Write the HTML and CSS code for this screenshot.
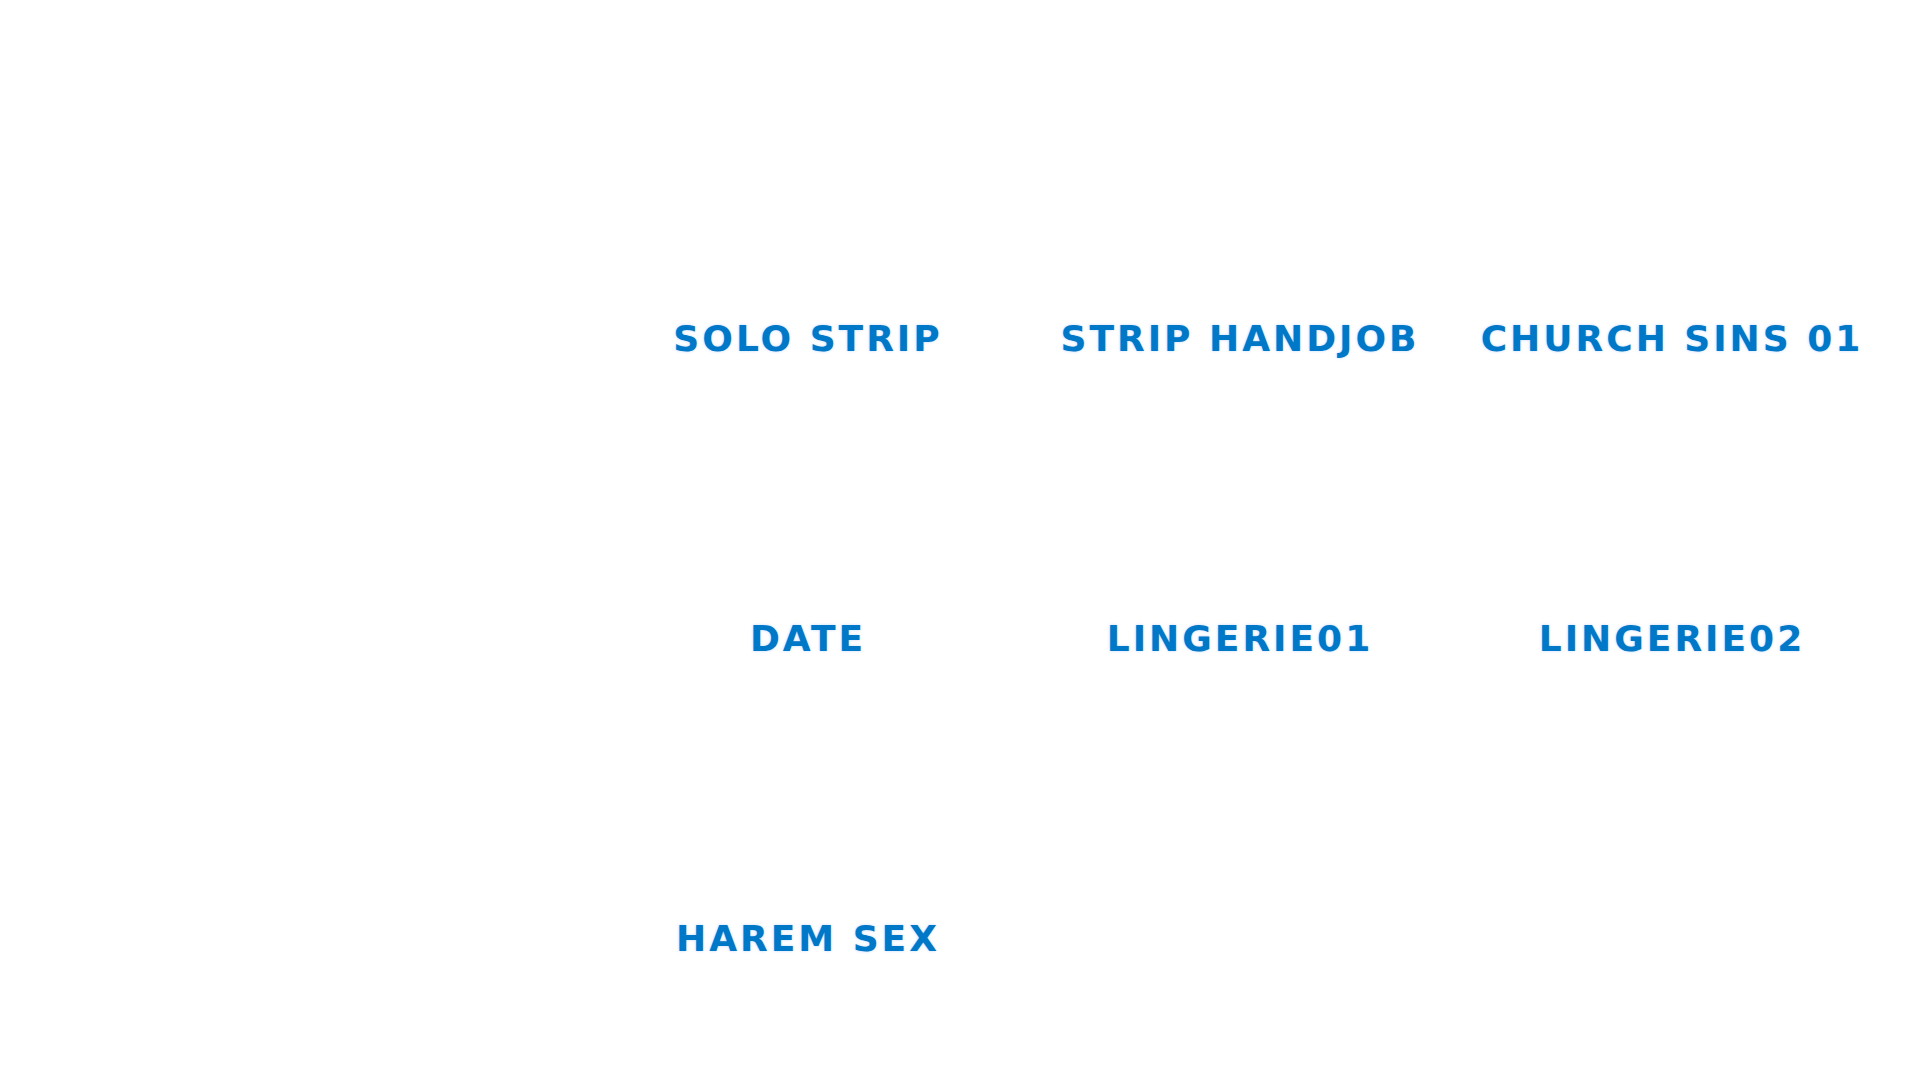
FILE: index.html
```html
<!DOCTYPE html>
<html lang="en">
<head>
    <meta charset="UTF-8">
    <meta name="viewport" content="width=device-width, initial-scale=1.0">
    <title>Scenes</title>
    <link rel="stylesheet" href="styles.css">
</head>
<body>
    <div class="scene-grid">
        <div class="scene"><span class="scene-title">Solo Strip</span></div>
        <div class="scene"><span class="scene-title">Strip Handjob</span></div>
        <div class="scene"><span class="scene-title">Church Sins 01</span></div>

        <div class="scene"><span class="scene-title">Date</span></div>
        <div class="scene"><span class="scene-title">Lingerie01</span></div>
        <div class="scene"><span class="scene-title">Lingerie02</span></div>

        <div class="scene"><span class="scene-title">Harem Sex</span></div>
    </div>
</body>
</html>
```

FILE: styles.css
```css
* {
    margin: 0;
    padding: 0;
    box-sizing: border-box;
}

body {
    background: #ffffff;
    font-family: 'DejaVu Sans', Verdana, sans-serif;
    min-height: 100vh;
}

.scene-grid {
    display: grid;
    grid-template-columns: repeat(3, 432px);
    grid-auto-rows: 300px;
    padding: 189px 0 0 592px;
}

.scene {
    display: flex;
    align-items: center;
    justify-content: center;
}

.scene-title {
    color: #0078c8;
    font-size: 36px;
    font-weight: bold;
    line-height: 1;
    text-transform: uppercase;
    letter-spacing: 3px;
    text-shadow: 0 0 3px rgba(120, 170, 255, 0.45);
}
```
